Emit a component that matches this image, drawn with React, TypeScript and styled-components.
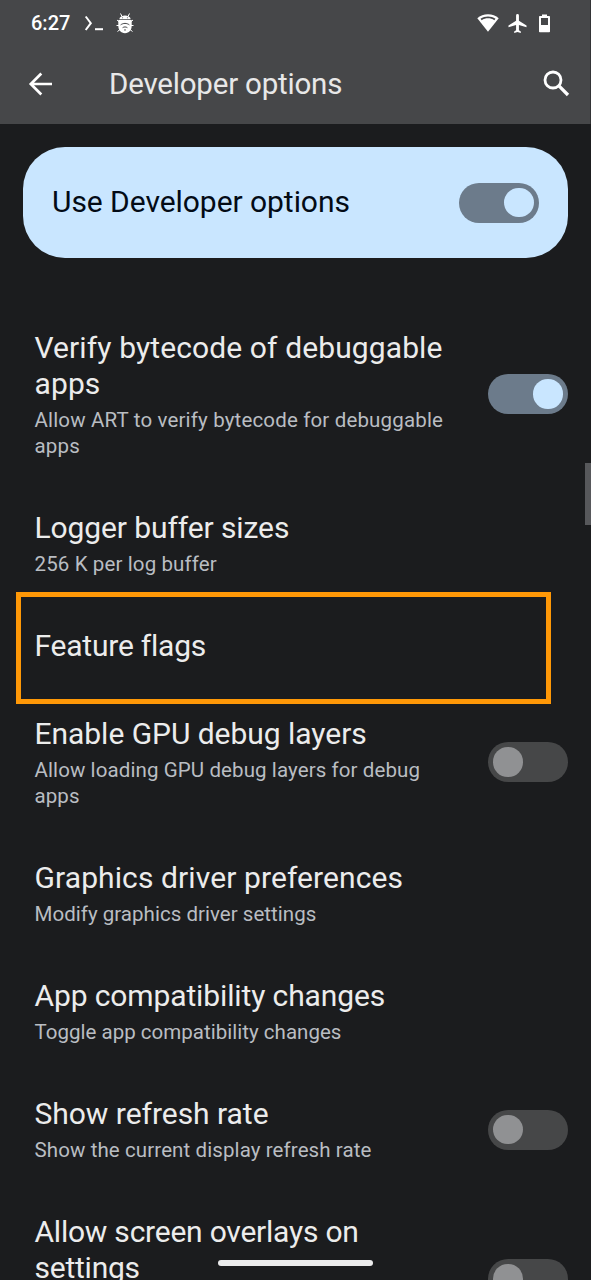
import React from "react";
import styled, { createGlobalStyle, css } from "styled-components";

const GlobalStyle = createGlobalStyle`
  * { box-sizing: border-box; }
  html, body { margin: 0; background: #1b1c1d; }
  body { overflow: hidden; font-family: Roboto, "Liberation Sans", sans-serif; }
`;

const Screen = styled.main`
  position: relative;
  width: 591px;
  height: 1280px;
  overflow: hidden;
  background: #1b1c1e;
  color: #ececec;
`;

const Header = styled.header`
  height: 124px;
  background: #464749;
  border-right: 1px solid #333436;
`;

const StatusBar = styled.div`
  display: flex;
  align-items: center;
  height: 46px;
  padding: 0 38px 0 31px;
  color: #fff;
`;

const Clock = styled.span`
  width: 53px;
  font-size: 20px;
  font-weight: 500;
  letter-spacing: 0;
  line-height: 24px;
`;

const StatusIcons = styled.div<{ $end?: boolean }>`
  display: flex;
  align-items: center;
  gap: ${(p) => (p.$end ? "9px" : "12px")};
  margin-left: ${(p) => (p.$end ? "auto" : "0")};
  svg { display: block; }
  ${(p) => p.$end && css`svg:last-child { margin-left: 2px; }`}
`;

const AppBar = styled.div`
  display: flex;
  align-items: center;
  height: 76px;
  padding: 0 20px 0 28px;
  svg { display: block; }
  svg:last-child { margin-bottom: 2px; }
`;

const AppTitle = styled.h1`
  flex: 1;
  margin: 0 0 0 57px;
  font-size: 29.5px;
  font-weight: 400;
  line-height: 36px;
  letter-spacing: -0.2px;
  color: #e8e8e8;
`;

const MasterCard = styled.section`
  display: flex;
  align-items: center;
  justify-content: space-between;
  height: 111px;
  margin: 23px 23px 46px;
  padding: 0 29px;
  border-radius: 42px;
  background: #c9e6ff;
  color: #030b16;
`;

const MasterLabel = styled.span`
  margin-bottom: 2px;
  font-size: 30px;
  line-height: 36px;
  letter-spacing: -0.05px;
`;

const Row = styled.div<{ $height?: number }>`
  position: relative;
  display: flex;
  align-items: center;
  justify-content: space-between;
  min-height: 88px;
  ${(p) => p.$height && css`height: ${p.$height}px;`}
  padding: 26px 23px 25px 34.5px;
`;

const Labels = styled.div`
  align-self: flex-start;
  width: 425px;
`;

const Title = styled.div<{ $spacing: number }>`
  font-size: 30px;
  line-height: 36px;
  letter-spacing: ${(p) => p.$spacing}px;
  white-space: pre-line;
`;

const Summary = styled.div<{ $spacing: number }>`
  margin-top: 5px;
  font-size: 20.5px;
  line-height: 26px;
  letter-spacing: ${(p) => p.$spacing}px;
  color: #b9bdc2;
  white-space: pre-line;
`;

const Highlight = styled.div`
  position: absolute;
  left: 16px;
  top: -10px;
  width: 535px;
  height: 112px;
  border: 5px solid #ff9807;
  pointer-events: none;
`;

const Track = styled.span<{ $on?: boolean; $lift?: boolean }>`
  display: flex;
  flex: none;
  align-items: center;
  justify-content: ${(p) => (p.$on ? "flex-end" : "flex-start")};
  width: 80px;
  height: 40px;
  margin-bottom: ${(p) => (p.$lift ? "1px" : "0")};
  padding: 0 5.500px 0 5px;
  border-radius: 20px;
  background: ${(p) => (p.$on ? "#6c7b8b" : "#464748")};
`;

const Thumb = styled.span<{ $on?: boolean }>`
  width: 29.5px;
  height: 29.5px;
  border-radius: 50%;
  background: ${(p) => (p.$on ? "#c9e6ff" : "#909193")};
`;

const ScrollThumb = styled.div`
  position: absolute;
  right: 0;
  top: 463px;
  width: 6px;
  height: 62px;
  background: #57585b;
`;

const GestureBar = styled.div`
  position: absolute;
  left: 218px;
  top: 1260px;
  width: 155px;
  height: 6px;
  border-radius: 3px;
  background: #ebebec;
`;

function Switch({ on, lift }: { on?: boolean; lift?: boolean }) {
  return (
    <Track $on={on} $lift={lift} role="switch" aria-checked={!!on}>
      <Thumb $on={on} />
    </Track>
  );
}

type Option = {
  title: string;
  summary?: string;
  toggle?: "on" | "off";
  lift?: boolean;
  highlighted?: boolean;
  height?: number;
  titleSpacing: number;
  summarySpacing?: number;
};

const options: Option[] = [
  {
    title: "Verify bytecode of debuggable\napps",
    summary: "Allow ART to verify bytecode for debuggable\napps",
    toggle: "on",
    lift: true,
    titleSpacing: 0.11,
    summarySpacing: 0.16,
  },
  {
    title: "Logger buffer sizes",
    summary: "256 K per log buffer",
    titleSpacing: -0.1,
    summarySpacing: 0.12,
  },
  { title: "Feature flags", highlighted: true, titleSpacing: -0.22 },
  {
    title: "Enable GPU debug layers",
    summary: "Allow loading GPU debug layers for debug\napps",
    toggle: "off",
    lift: true,
    titleSpacing: -0.04,
    summarySpacing: 0.1,
  },
  {
    title: "Graphics driver preferences",
    summary: "Modify graphics driver settings",
    titleSpacing: 0.1,
    summarySpacing: 0.03,
  },
  {
    title: "App compatibility changes",
    summary: "Toggle app compatibility changes",
    titleSpacing: -0.12,
    summarySpacing: 0.02,
  },
  {
    title: "Show refresh rate",
    summary: "Show the current display refresh rate",
    toggle: "off",
    titleSpacing: -0.03,
    summarySpacing: 0.1,
  },
  {
    title: "Allow screen overlays on\nsettings",
    toggle: "off",
    height: 181,
    titleSpacing: -0.23,
  },
];

export default function App() {
  return (
    <>
      <GlobalStyle />
      <Screen>
        <Header>
          <StatusBar>
            <Clock>6:27</Clock>
            <StatusIcons>
              <svg width="20" height="18" viewBox="0 0 20 18" fill="none" stroke="#fff" strokeWidth="2">
                <path d="M1.700 2.500 6.800 9.200 1.700 16" />
                <path d="M11 15.200h8" />
              </svg>
              <svg width="18" height="22" viewBox="0 0 18 22" fill="none">
                <path
                  d="M4.500 1.500 6 4.500M13.500 1.500 12 4.500M1 8l2.500 2M17 8l-2.500 2M.5 13.500H3M17.500 13.500H15M1.500 19.500l2.500-2M16.500 19.500l-2.500-2"
                  stroke="#fff"
                  strokeWidth="1"
                />
                <path d="M3.300 7.300C3.700 4.600 6.200 3.500 9 3.500s5.300 1.100 5.700 3.800Z" fill="#fff" />
                <path d="M2.300 8h13.400v5.800c0 4.400-2.600 7.400-6.700 7.400s-6.700-3-6.700-7.400Z" fill="#fff" />
                <path
                  d="M4.600 12.900c2.700-2 6.100-2 8.800 0M6.600 15.700c1.500-1 3.300-1 4.800 0"
                  stroke="#464749"
                  strokeWidth="1"
                />
                <path d="M7.900 17.600h2.200L9 18.900Z" fill="#464749" />
                <circle cx="6.600" cy="5.700" r=".5" fill="#464749" />
                <circle cx="11.400" cy="5.700" r=".5" fill="#464749" />
              </svg>
            </StatusIcons>
            <StatusIcons $end>
              <svg width="22" height="18" viewBox="0 0 22 18">
                <path d="M11 .2C6.900.200 3.200 1.700.3 4.200L11 17.700 21.700 4.200C18.800 1.700 15.100.200 11 .2Z" fill="#fff" />
                <path d="M3.500 4.700C8 1.700 14 1.700 18.500 4.700L17.300 6.300C13.500 3.700 8.500 3.700 4.700 6.300Z" fill="#464749" />
              </svg>
              <svg width="19" height="19" viewBox="2 2 20 20">
                <path
                  d="M21.500 16v-2l-8-5V3.500a1.500 1.500 0 0 0-3 0V9l-8 5v2l8-2.500V19l-2 1.500V22l3.500-1 3.500 1v-1.500l-2-1.500v-5.500Z"
                  fill="#fff"
                />
              </svg>
              <svg width="14" height="19" viewBox="0 0 14 19">
                <path
                  d="M4 .5h5V2h2.200q.8 0 .8.800V17.500q0 .8-.8.800H1.800Q1 18.300 1 17.500V2.800Q1 2 1.800 2H4Z"
                  fill="#fff"
                />
                <path d="M3 4h7v7H3Z" fill="#464749" />
              </svg>
            </StatusIcons>
          </StatusBar>
          <AppBar>
            <svg width="24" height="24" viewBox="0 0 24 24" fill="none" stroke="#fff" strokeWidth="2.700">
              <path d="M24 12H3M13.300 1.500 2.800 12l10.500 10.500" />
            </svg>
            <AppTitle>Developer options</AppTitle>
            <svg width="27" height="27" viewBox="0 0 27 27" fill="none" stroke="#fff" strokeWidth="2.800">
              <circle cx="10" cy="10" r="8" />
              <path d="m15.700 15.700 9.300 9.300" strokeWidth="3.300" />
            </svg>
          </AppBar>
        </Header>
        <MasterCard>
          <MasterLabel>Use Developer options</MasterLabel>
          <Switch on />
        </MasterCard>
        {options.map((o) => (
          <Row key={o.title} $height={o.height}>
            <Labels>
              <Title $spacing={o.titleSpacing}>{o.title}</Title>
              {o.summary && <Summary $spacing={o.summarySpacing ?? 0}>{o.summary}</Summary>}
            </Labels>
            {o.toggle && <Switch on={o.toggle === "on"} lift={o.lift} />}
            {o.highlighted && <Highlight />}
          </Row>
        ))}
        <ScrollThumb />
        <GestureBar />
      </Screen>
    </>
  );
}
